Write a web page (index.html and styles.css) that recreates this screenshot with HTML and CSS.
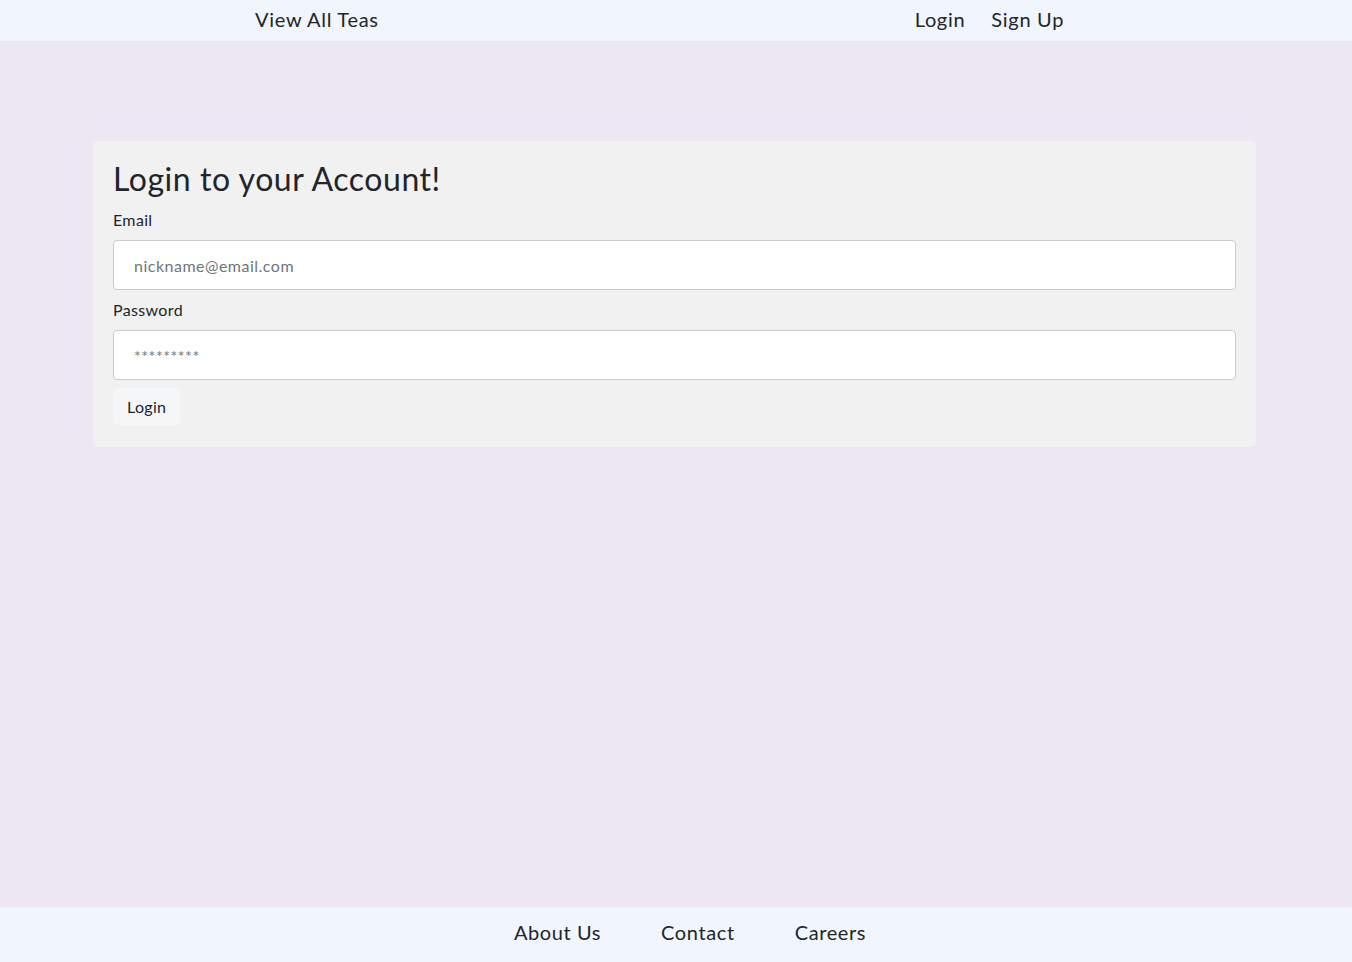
FILE: index.html
```html
<!DOCTYPE html>
<html lang="en">
<head>
<meta charset="utf-8">
<title>Login</title>
<link rel="stylesheet" href="styles.css">
</head>
<body>
<header class="topbar">
  <nav class="nav-left"><a class="nav-link" href="#">View All Teas</a></nav>
  <nav class="nav-right">
    <a class="nav-link" href="#">Login</a>
    <a class="nav-link" href="#">Sign Up</a>
  </nav>
</header>
<main class="main">
  <form class="card">
    <h2 class="card-title">Login to your Account!</h2>
    <label class="field-label" for="email">Email</label>
    <input class="field-input" id="email" type="email" placeholder="nickname@email.com">
    <label class="field-label" for="password">Password</label>
    <input class="field-input" id="password" type="password" placeholder="*********">
    <button class="btn" type="button">Login</button>
  </form>
</main>
<footer class="footer">
  <a class="foot-link" href="#">About Us</a>
  <a class="foot-link" href="#">Contact</a>
  <a class="foot-link" href="#">Careers</a>
</footer>
</body>
</html>
```
FILE: styles.css
```css
* { box-sizing: border-box; }
html, body { height: 100%; }
body {
  margin: 0;
  font-family: "Lato", "Open Sans", sans-serif;
  font-weight: 400;
  color: #212529;
  background: #ede7f4;
  display: flex;
  flex-direction: column;
}
a { color: #212529; text-decoration: none; }
.topbar {
  height: 41px;
  background: #f1f6fe;
  display: flex;
  align-items: center;
  padding-left: 255px;
  padding-bottom: 3px;
}
.nav-left { flex: 0 0 auto; }
.nav-right {
  margin-left: 536px;
  display: flex;
  gap: 26px;
}
.nav-link { font-size: 20px; line-height: 24px; letter-spacing: 0.7px; }
.main {
  flex: 1;
  padding: 100px 96px 0 93px;
}
.card {
  background: #f1f1f1;
  border-radius: 5px;
  padding: 18px 20px 22px 20px;
  display: flex;
  flex-direction: column;
  align-items: flex-start;
}
.card-title {
  margin: 0 0 10px;
  font-size: 32px;
  font-weight: 400;
  line-height: 39px;
  letter-spacing: 0.55px;
}
.field-label {
  font-size: 16px;
  line-height: 24px;
  padding-bottom: 1px;
  margin-bottom: 7px;
  letter-spacing: 0.35px;
}
.field-input {
  width: 100%;
  height: 50px;
  border: 1px solid #cccccc;
  border-radius: 4px;
  background: #fff;
  padding: 0 20px;
  font-family: inherit;
  font-size: 16px;
  letter-spacing: 0.5px;
  color: #212529;
  margin-bottom: 8px;
}
.field-input::placeholder { color: #6c757d; }
.btn {
  font-family: inherit;
  font-size: 16px;
  line-height: 24px;
  letter-spacing: 0.3px;
  padding: 6px 13px;
  height: 37px;
  border: 1px solid #f5f6f8;
  border-radius: 5px;
  background: #f5f6f8;
  color: #212529;
}
.footer {
  height: 55px;
  background: #f1f6fe;
  display: flex;
  align-items: center;
  justify-content: center;
  gap: 60px;
  padding-left: 28px;
  padding-bottom: 5px;
}
.foot-link { font-size: 20px; line-height: 24px; letter-spacing: 0.6px; }
```
